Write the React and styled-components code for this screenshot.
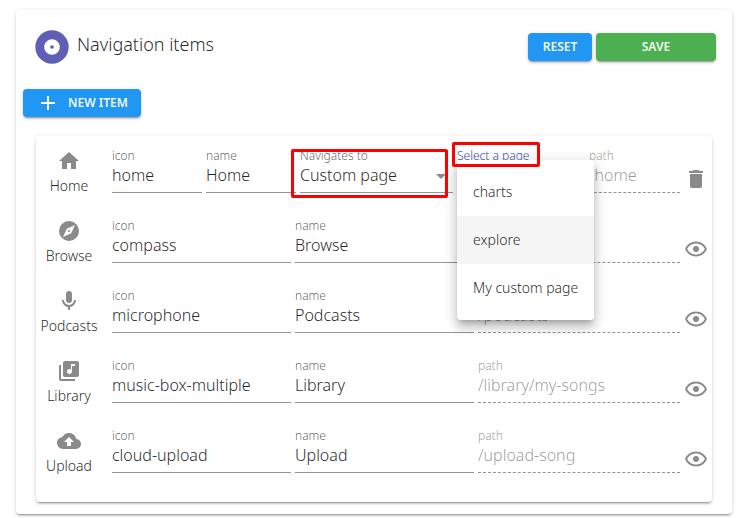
import React from "react";
import styled, { createGlobalStyle, css } from "styled-components";

const GlobalStyle = createGlobalStyle`
  *, *::before, *::after { box-sizing: border-box; }
  body {
    margin: 0;
    background: #fff;
    color: rgba(0, 0, 0, 0.87);
    font-family: "Noto Sans", "Open Sans", sans-serif;
    font-weight: 300;
  }
  button, input, select { font: inherit; color: inherit; }
`;

const ICONS = {
  disc: "M12,2A10,10 0 1,0 22,12A10,10 0 0,0 12,2M12,7.3A4.7,4.7 0 1,1 7.3,12A4.7,4.7 0 0,1 12,7.3M12,10.9A1.1,1.1 0 1,0 13.1,12A1.1,1.1 0 0,0 12,10.9Z",
  plus: "M19,13H13V19H11V13H5V11H11V5H13V11H19V13Z",
  home: "M10,20V14H14V20H19V12H22L12,3L2,12H5V20H10Z",
  compass:
    "M14.19,14.19L6,18L9.81,9.81L18,6M12,2A10,10 0 0,0 2,12A10,10 0 0,0 12,22A10,10 0 0,0 22,12A10,10 0 0,0 12,2M12,10.9A1.1,1.1 0 0,0 10.9,12A1.1,1.1 0 0,0 12,13.1A1.1,1.1 0 0,0 13.1,12A1.1,1.1 0 0,0 12,10.9Z",
  microphone:
    "M12,2A3,3 0 0,1 15,5V11A3,3 0 0,1 12,14A3,3 0 0,1 9,11V5A3,3 0 0,1 12,2M19,11C19,14.53 16.39,17.44 13,17.93V21H11V17.93C7.61,17.44 5,14.53 5,11H7A5,5 0 0,0 12,16A5,5 0 0,0 17,11H19Z",
  library:
    "M20 2H8c-1.1 0-2 .9-2 2v12c0 1.1.9 2 2 2h12c1.1 0 2-.9 2-2V4c0-1.1-.9-2-2-2zm-2 5h-3v5.5c0 1.38-1.12 2.5-2.5 2.5S10 13.88 10 12.5s1.12-2.5 2.5-2.5c.57 0 1.08.19 1.5.51V5h4v2zM4 6H2v14c0 1.1.9 2 2 2h14v-2H4V6z",
  upload:
    "M14,13V17H10V13H7L12,8L17,13M19.35,10.03C18.67,6.59 15.64,4 12,4C9.11,4 6.6,5.64 5.35,8.03C2.34,8.36 0,10.9 0,14A6,6 0 0,0 6,20H19A5,5 0 0,0 24,15C24,12.36 21.95,10.22 19.35,10.03Z",
  trash:
    "M19,4H15.5L14.5,3H9.5L8.5,4H5V6H19M6,19A2,2 0 0,0 8,21H16A2,2 0 0,0 18,19V7H6V19Z",
  eye: "M12,9A3,3 0 0,1 15,12A3,3 0 0,1 12,15A3,3 0 0,1 9,12A3,3 0 0,1 12,9M12,4.5C17,4.5 21.27,7.61 23,12C21.27,16.39 17,19.5 12,19.5C7,19.5 2.73,16.39 1,12C2.73,7.61 7,4.5 12,4.5M3.18,12C4.83,15.36 8.24,17.5 12,17.5C15.76,17.5 19.17,15.36 20.82,12C19.17,8.64 15.76,6.5 12,6.5C8.24,6.5 4.83,8.64 3.18,12Z",
  down: "M7,10L12,15L17,10H7Z",
};

const Svg = styled.svg`
  display: block;
  flex: none;
  fill: currentColor;
`;

function Icon({ name, size = 24 }) {
  return (
    <Svg width={size} height={size} viewBox="0 0 24 24" aria-hidden="true">
      <path fillRule="evenodd" d={ICONS[name]} />
    </Svg>
  );
}

const raised = css`
  border-radius: 4px;
  box-shadow: 0 3px 1px -2px rgba(0, 0, 0, 0.2), 0 2px 2px rgba(0, 0, 0, 0.14),
    0 1px 5px rgba(0, 0, 0, 0.12);
`;

const Card = styled.main`
  ${raised}
  margin: 10px 17px 4px 16px;
  padding: 17px 0 12px;
  background: #fff;
`;

const Header = styled.header`
  display: flex;
  align-items: center;
  gap: 4px;
  padding: 0 16px;
`;

const Logo = styled.span`
  color: #5f60b5;
`;

const Title = styled.h1`
  flex: 1;
  margin: 0;
  padding: 0 0 6px 1px;
  font-size: 18px;
  line-height: 24px;
  font-weight: 300;
`;

const Button = styled.button`
  ${raised}
  display: inline-flex;
  align-items: center;
  justify-content: center;
  gap: 8px;
  height: 28px;
  min-width: ${(p) => (p.$wide ? "120px" : "64px")};
  padding: 0 13px;
  border: 0;
  background: ${(p) => (p.$tone === "success" ? "#4caf50" : "#2196f3")};
  color: rgba(255, 255, 255, 0.95);
  font-size: 12px;
  font-weight: 600;
  line-height: 16px;
  cursor: pointer;
`;

const Toolbar = styled.div`
  display: flex;
  padding: 22px 7px 19px;
`;

const Panel = styled.section`
  ${raised}
  margin: 0 20px;
  padding: 8px 0;
`;

const Row = styled.div`
  display: flex;
  height: 70px;
`;

const Preview = styled.div`
  display: flex;
  flex: none;
  flex-direction: column;
  align-items: center;
  gap: 3px;
  width: 66px;
  margin-right: 10px;
  padding-top: 5px;
  font-size: 14px;
  line-height: 20px;

  svg { color: #8a8a8a; }
`;

const Fields = styled.div`
  display: grid;
  flex: 1;
  align-items: start;
  gap: 4px;
  padding-top: 4px;
  grid-template-columns: ${(p) =>
    p.$custom
      ? "minmax(0, 90fr) minmax(0, 90fr) minmax(0, 153fr) minmax(0, 128fr) minmax(0, 91fr)"
      : "minmax(0, 179fr) minmax(0, 179fr) minmax(0, 202fr)"};
`;

const FieldBox = styled.div`
  position: relative;
  display: flex;
  flex-direction: column;
`;

const Label = styled.label`
  color: ${(p) =>
    p.$active ? "#3f51b5" : p.$disabled ? "rgba(0,0,0,0.42)" : "rgba(0,0,0,0.64)"};
  font-size: 12px;
  line-height: 16px;
  white-space: nowrap;
`;

const control = css`
  display: block;
  width: 100%;
  height: 29px;
  padding: 0 0 6px;
  border: 0;
  border-bottom: 1px solid #949494;
  border-radius: 0;
  outline: 0;
  background: transparent;
  font-size: 16px;
  line-height: 22px;
`;

const Input = styled.input`
  ${control}
  &:disabled {
    border-bottom-style: dashed;
    color: rgba(0, 0, 0, 0.42);
  }
`;

const Select = styled.select`
  ${control}
  appearance: none;
`;

const PageTrigger = styled.button`
  ${control}
`;

const Arrow = styled.span`
  position: absolute;
  right: 0;
  bottom: 5px;
  color: #8a8a8a;
  pointer-events: none;
`;

const Menu = styled.ul`
  position: absolute;
  z-index: 2;
  top: 12px;
  left: 0;
  margin: 0;
  padding: 8px 0;
  border-radius: 4px;
  background: #fff;
  box-shadow: 0 5px 5px -3px rgba(0, 0, 0, 0.2), 0 8px 10px 1px rgba(0, 0, 0, 0.14),
    0 3px 14px 2px rgba(0, 0, 0, 0.12);
  list-style: none;
`;

const MenuItem = styled.li`
  padding: 0 16px;
  background: ${(p) => (p.$hovered ? "#f5f5f5" : "transparent")};
  font-size: 14px;
  line-height: 48px;
  white-space: nowrap;
  cursor: pointer;
`;

const Highlight = styled.span`
  position: absolute;
  z-index: 3;
  border: 3px solid #f00;
  border-radius: 2px;
  pointer-events: none;
  ${(p) =>
    p.$around === "label"
      ? "top: -6px; left: -5px; width: 88px; height: 25px;"
      : "top: 1px; right: 5px; bottom: -5px; left: -9px;"}
`;

const IconButton = styled.button`
  flex: none;
  align-self: flex-start;
  margin: 23px 4px 0;
  padding: 0;
  border: 0;
  background: none;
  color: #8a8a8a;
  cursor: pointer;
`;

function TextField({ id, label, value, disabled }) {
  return (
    <FieldBox>
      <Label htmlFor={id} $disabled={disabled}>{label}</Label>
      <Input id={id} defaultValue={value} disabled={disabled} />
    </FieldBox>
  );
}

function NavigatesTo() {
  return (
    <FieldBox>
      <Label htmlFor="target">Navigates to</Label>
      <Select id="target" defaultValue="custom">
        <option value="custom">Custom page</option>
      </Select>
      <Arrow><Icon name="down" /></Arrow>
      <Highlight $around="field" />
    </FieldBox>
  );
}

function PagePicker() {
  return (
    <FieldBox>
      <Label id="page-label" htmlFor="page" $active>Select a page</Label>
      <PageTrigger id="page" type="button" aria-haspopup="listbox" aria-expanded="true" />
      <Menu role="listbox" aria-labelledby="page-label">
        {["charts", "explore", "My custom page"].map((page) => (
          <MenuItem key={page} role="option" $hovered={page === "explore"}>{page}</MenuItem>
        ))}
      </Menu>
      <Highlight $around="label" />
    </FieldBox>
  );
}

const ITEMS = [
  { name: "Home", icon: "home", art: "home", path: "/home", custom: true },
  { name: "Browse", icon: "compass", art: "compass", path: "/browse" },
  { name: "Podcasts", icon: "microphone", art: "microphone", path: "/podcasts" },
  { name: "Library", icon: "music-box-multiple", art: "library", path: "/library/my-songs" },
  { name: "Upload", icon: "cloud-upload", art: "upload", path: "/upload-song" },
];

function NavItem({ item }) {
  const id = item.name.toLowerCase();
  return (
    <Row>
      <Preview>
        <Icon name={item.art} />
        {item.name}
      </Preview>
      <Fields $custom={item.custom}>
        <TextField id={`${id}-icon`} label="icon" value={item.icon} />
        <TextField id={`${id}-name`} label="name" value={item.name} />
        {item.custom && <NavigatesTo />}
        {item.custom && <PagePicker />}
        <TextField id={`${id}-path`} label="path" value={item.path} disabled />
      </Fields>
      <IconButton type="button" aria-label={item.custom ? "Delete item" : "Toggle visibility"}>
        <Icon name={item.custom ? "trash" : "eye"} />
      </IconButton>
    </Row>
  );
}

export default function App() {
  return (
    <>
      <GlobalStyle />
      <Card>
        <Header>
          <Logo><Icon name="disc" size={40} /></Logo>
          <Title>Navigation items</Title>
          <Button type="button">RESET</Button>
          <Button type="button" $tone="success" $wide>SAVE</Button>
        </Header>
        <Toolbar>
          <Button type="button"><Icon name="plus" />NEW ITEM</Button>
        </Toolbar>
        <Panel>
          {ITEMS.map((item) => <NavItem key={item.name} item={item} />)}
        </Panel>
      </Card>
    </>
  );
}
